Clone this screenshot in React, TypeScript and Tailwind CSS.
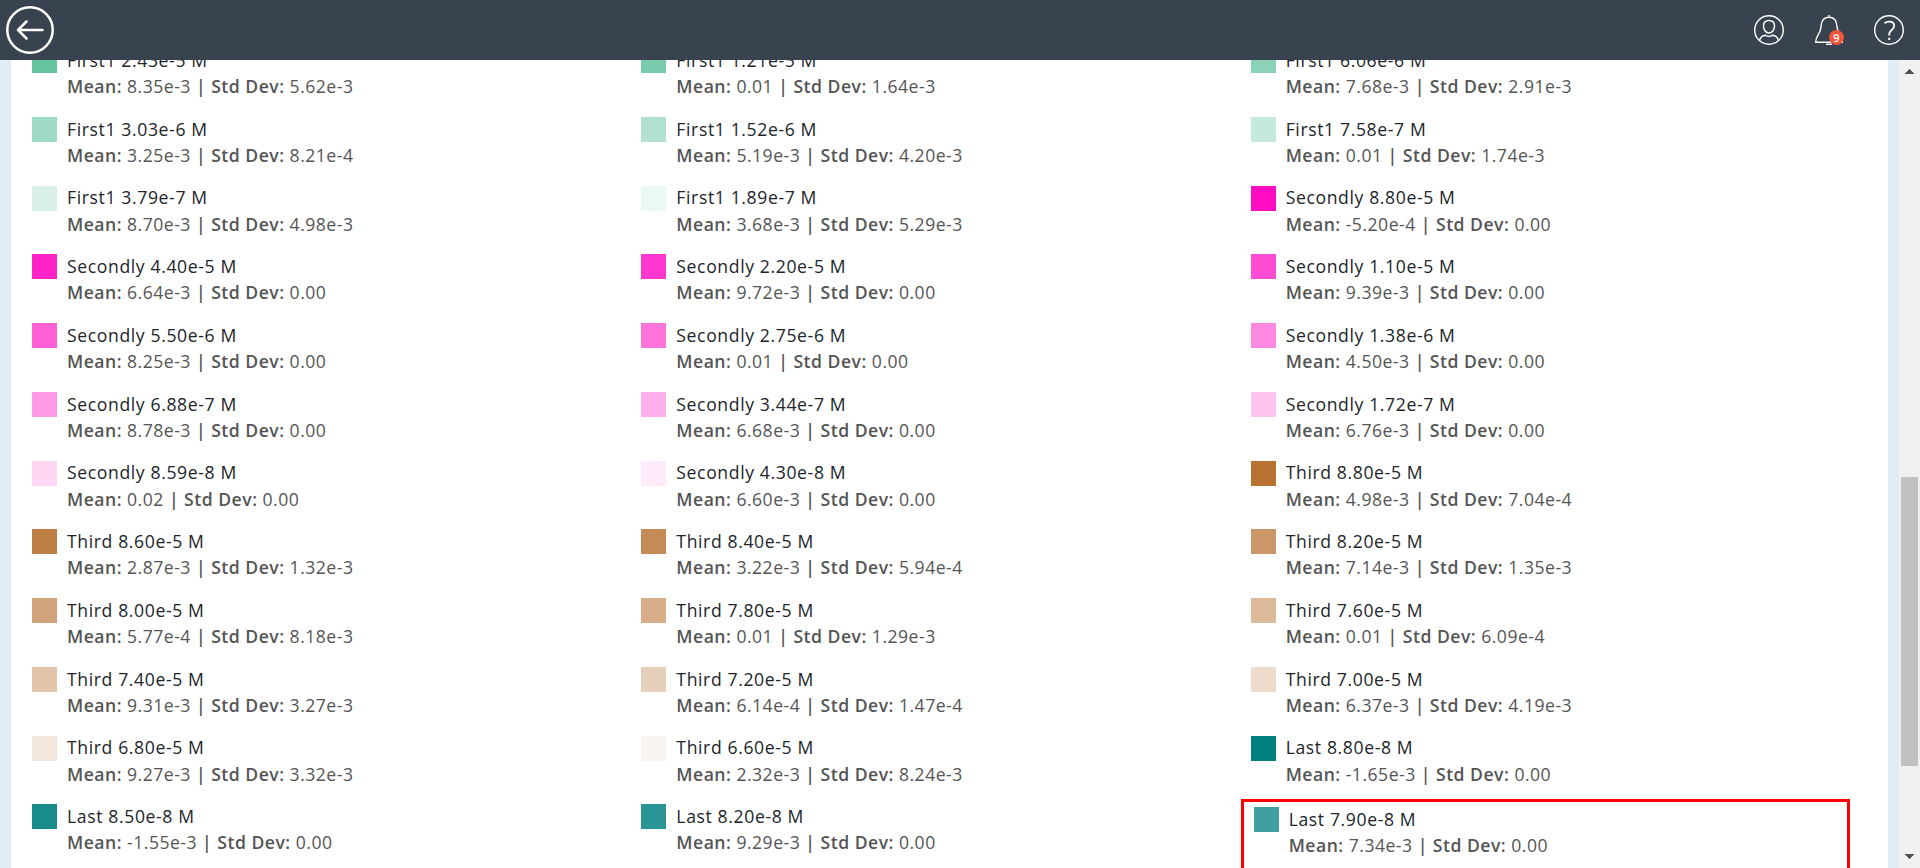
type Item = [name: string, mean: string, dev: string, color: string];

const items: Item[] = [
  ["First1 2.43e-5 M", "8.35e-3", "5.62e-3", "#66c3a0"],
  ["First1 1.21e-5 M", "0.01", "1.64e-3", "#79cbad"],
  ["First1 6.06e-6 M", "7.68e-3", "2.91e-3", "#8cd2b9"],
  ["First1 3.03e-6 M", "3.25e-3", "8.21e-4", "#9fdac5"],
  ["First1 1.52e-6 M", "5.19e-3", "4.20e-3", "#b2e1d0"],
  ["First1 7.58e-7 M", "0.01", "1.74e-3", "#c5e9dc"],
  ["First1 3.79e-7 M", "8.70e-3", "4.98e-3", "#d9f0e7"],
  ["First1 1.89e-7 M", "3.68e-3", "5.29e-3", "#ecf8f4"],
  ["Secondly 8.80e-5 M", "-5.20e-4", "0.00", "#ff0dc3"],
  ["Secondly 4.40e-5 M", "6.64e-3", "0.00", "#ff23c8"],
  ["Secondly 2.20e-5 M", "9.72e-3", "0.00", "#ff37ce"],
  ["Secondly 1.10e-5 M", "9.39e-3", "0.00", "#ff4cd2"],
  ["Secondly 5.50e-6 M", "8.25e-3", "0.00", "#ff60d6"],
  ["Secondly 2.75e-6 M", "0.01", "0.00", "#ff74db"],
  ["Secondly 1.38e-6 M", "4.50e-3", "0.00", "#ff88e1"],
  ["Secondly 6.88e-7 M", "8.78e-3", "0.00", "#ff9be6"],
  ["Secondly 3.44e-7 M", "6.68e-3", "0.00", "#ffafeb"],
  ["Secondly 1.72e-7 M", "6.76e-3", "0.00", "#ffc3f0"],
  ["Secondly 8.59e-8 M", "0.02", "0.00", "#ffd7f5"],
  ["Secondly 4.30e-8 M", "6.60e-3", "0.00", "#ffebfa"],
  ["Third 8.80e-5 M", "4.98e-3", "7.04e-4", "#b87333"],
  ["Third 8.60e-5 M", "2.87e-3", "1.32e-3", "#be7f45"],
  ["Third 8.40e-5 M", "3.22e-3", "5.94e-4", "#c58b56"],
  ["Third 8.20e-5 M", "7.14e-3", "1.35e-3", "#cb9768"],
  ["Third 8.00e-5 M", "5.77e-4", "8.18e-3", "#d1a37a"],
  ["Third 7.80e-5 M", "0.01", "1.29e-3", "#d8ae8a"],
  ["Third 7.60e-5 M", "0.01", "6.09e-4", "#dcb999"],
  ["Third 7.40e-5 M", "9.31e-3", "3.27e-3", "#e1c4aa"],
  ["Third 7.20e-5 M", "6.14e-4", "1.47e-4", "#e7d0bb"],
  ["Third 7.00e-5 M", "6.37e-3", "4.19e-3", "#eddccc"],
  ["Third 6.80e-5 M", "9.27e-3", "3.32e-3", "#f3e8de"],
  ["Third 6.60e-5 M", "2.32e-3", "8.24e-3", "#f9f4ef"],
  ["Last 8.80e-8 M", "-1.65e-3", "0.00", "#008080"],
  ["Last 8.50e-8 M", "-1.55e-3", "0.00", "#188b8b"],
  ["Last 8.20e-8 M", "9.29e-3", "0.00", "#2b9595"],
  ["Last 7.90e-8 M", "7.34e-3", "0.00", "#40a0a0"],
];

function LegendItem({ item, selected }: { item: Item; selected: boolean }) {
  const [name, mean, dev, color] = item;
  return (
    <div
      className={
        selected
          ? "flex h-[80px] border-[3px] border-[#ff0000] pt-[5px] pl-[10px]"
          : "flex h-[68.75px] pt-[5px] pl-[10px]"
      }
    >
      <div className="size-[25px] shrink-0" style={{ backgroundColor: color }} />
      <div className="-mt-[1.2px] ml-[10px] whitespace-nowrap text-[17.6px] leading-[26.4px] tracking-[0.5px]">
        <div className="tracking-[0.62px] text-[#212529]">{name}</div>
        <div className="-mt-[0.2px] tracking-[0.49px] text-[#555555]">
          <span className="font-semibold">Mean:</span> {mean}{" "}
          <span className="font-semibold">| Std Dev:</span> {dev}
        </div>
      </div>
    </div>
  );
}

function Header() {
  return (
    <header className="flex h-[60px] shrink-0 items-center justify-between bg-[#38434f] pr-4 pl-[6px]">
      <svg width="48" height="48" viewBox="0 0 48 48" fill="none" stroke="#fff" strokeLinecap="round" strokeLinejoin="round">
        <circle cx="24" cy="24" r="22.7" strokeWidth="2.5" />
        <path d="M36.500 24H12M20.500 15.500L12 24l8.500 8.500" strokeWidth="2.500" />
      </svg>
      <div className="flex items-center gap-[30px]">
        <svg width="30" height="30" viewBox="0 0 30 30" fill="none" stroke="#fff" strokeWidth="1.400">
          <circle cx="15" cy="15" r="14.300" />
          <path d="M15 5.500c-3.400 0-5.500 2.300-5.500 5.500 0 3.900 2.500 7 5.500 7s5.500-3.100 5.500-7c0-3.200-2.100-5.500-5.500-5.500z" />
          <path d="M5.500 25.600c.8-3.200 2.500-5.200 6-5.400 1.700 1.600 5.300 1.600 7 0 3.500.2 5.200 2.200 6 5.400" />
        </svg>
        <div className="relative size-[30px]">
          <svg width="30" height="30" viewBox="0 0 30 30" fill="none" stroke="#fff" strokeWidth="1.400">
            <path d="M15 0v2.200M1.700 27.300h26.600c0-3-.9-5.200-2.700-7.900-3.600-5.200-1.900-8.900-3.800-13.100C20.600 3.600 18.400 2.200 15 2.200s-5.600 1.400-6.800 4.100C6.300 10.500 8 14.200 4.400 19.400c-1.800 2.700-2.700 4.900-2.700 7.900z" />
            <path d="M12 29.300h6" />
          </svg>
          <span className="absolute top-[15px] left-[15px] flex size-[15px] items-center justify-center rounded-full bg-[#f4553a] text-[11px] leading-none font-semibold text-white">
            9
          </span>
        </div>
        <svg width="30" height="30" viewBox="0 0 30 30" fill="none" stroke="#fff" strokeWidth="1.400">
          <circle cx="15" cy="15" r="14.300" />
          <path d="M10.500 8.200c1.300-1.100 2.800-1.500 4.600-1.500 3 0 5 1.500 5 4.200 0 4.200-4.900 4.100-4.900 8.500v1" strokeWidth="1.800" />
          <path d="M15.200 22.800v2.200" strokeWidth="2" />
        </svg>
      </div>
    </header>
  );
}

export default function App() {
  return (
    <div className="flex h-[868px] w-[1920px] flex-col overflow-hidden bg-white font-['Open_Sans','Noto_Sans',sans-serif]">
      <Header />
      <main className="flex min-h-0 flex-1">
        <div className="w-[11px] shrink-0 bg-[#e0edf5]" />
        <div className="min-w-0 flex-1 overflow-hidden px-[11px]">
          <div className="-mt-[16.95px] grid w-[1828px] grid-cols-3">
            {items.map((item, i) => (
              <LegendItem key={item[0]} item={item} selected={i === items.length - 1} />
            ))}
          </div>
        </div>
        <div className="w-[11px] shrink-0 bg-[#e0edf5]" />
        <div className="flex w-[21px] shrink-0 flex-col items-center bg-[#f1f1f1]">
          <svg className="mt-[9px] shrink-0" width="9" height="5" viewBox="0 0 9 5" shapeRendering="crispEdges">
            <path d="M0 5L4.500 0L9 5z" fill="#505050" />
          </svg>
          <div className="mt-[403px] h-[289px] w-[17px] shrink-0 bg-[#c1c1c1]" />
          <svg className="mt-[88px] shrink-0" width="9" height="5" viewBox="0 0 9 5" shapeRendering="crispEdges">
            <path d="M0 0L4.500 5L9 0z" fill="#505050" />
          </svg>
        </div>
      </main>
    </div>
  );
}
